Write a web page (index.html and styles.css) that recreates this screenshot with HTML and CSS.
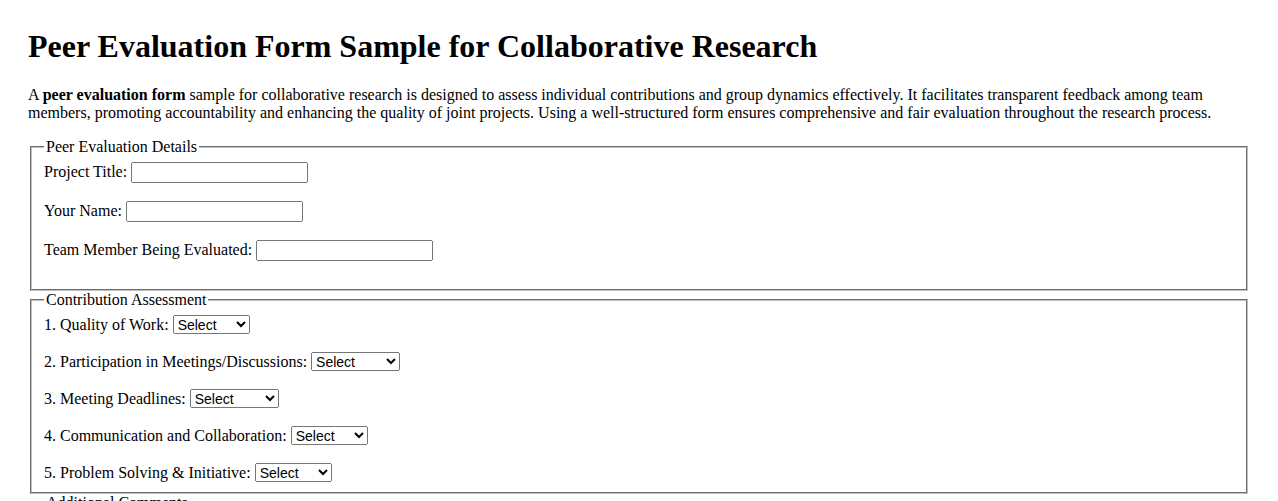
FILE: index.html
```html
<!DOCTYPE html>
<html lang="en">
<head>
<meta charset="utf-8">
<title>Peer Evaluation Form Sample for Collaborative Research</title>
<link rel="stylesheet" href="styles.css">
</head>
<body>
<h1 class="title">Peer Evaluation Form Sample for Collaborative Research</h1>
<p class="intro">A <strong>peer evaluation form</strong> sample for collaborative research is designed to assess individual contributions and group dynamics effectively. It facilitates transparent feedback among team members, promoting accountability and enhancing the quality of joint projects. Using a well-structured form ensures comprehensive and fair evaluation throughout the research process.</p>
<form class="form">
<fieldset class="group">
<legend>Peer Evaluation Details</legend>
<label for="title">Project Title:</label> <input type="text" id="title" class="field"><br><br>
<label for="name">Your Name:</label> <input type="text" id="name" class="field"><br><br>
<label for="member">Team Member Being Evaluated:</label> <input type="text" id="member" class="field"><br><br>
</fieldset>
<fieldset class="group">
<legend>Contribution Assessment</legend>
<label for="q1">1. Quality of Work:</label> <select id="q1" class="pick pick-short"><option>Select</option><option>Excellent</option><option>Good</option><option>Fair</option><option>Poor</option></select><br><br>
<label for="q2">2. Participation in Meetings/Discussions:</label> <select id="q2" class="pick pick-long"><option>Select</option><option>Very Active</option><option>Active</option><option>Moderate</option><option>Inactive</option></select><br><br>
<label for="q3">3. Meeting Deadlines:</label> <select id="q3" class="pick pick-long"><option>Select</option><option>Always</option><option>Usually</option><option>Sometimes</option><option>Rarely</option></select><br><br>
<label for="q4">4. Communication and Collaboration:</label> <select id="q4" class="pick pick-short"><option>Select</option><option>Excellent</option><option>Good</option><option>Fair</option><option>Poor</option></select><br><br>
<label for="q5">5. Problem Solving &amp; Initiative:</label> <select id="q5" class="pick pick-short"><option>Select</option><option>Excellent</option><option>Good</option><option>Fair</option><option>Poor</option></select>
</fieldset>
<fieldset class="group">
<legend>Additional Comments</legend>
<textarea class="comments" rows="4" cols="50"></textarea>
</fieldset>
</form>
</body>
</html>
```
FILE: styles.css
```css
body {
  margin: 28px;
  font-family: "Liberation Serif", "Times New Roman", serif;
  font-size: 16px;
  color: #000;
  background: #fff;
}
.title {
  margin-top: 0;
  font-size: 32px;
  font-weight: bold;
}
.group {
  margin: 0 2px;
  border: 2px groove #c0c0c0;
}
.field {
  box-sizing: border-box;
  width: 177px;
  height: 21px;
  font-family: "Liberation Sans", Arial, sans-serif;
  font-size: 13.333px;
}
.pick {
  box-sizing: border-box;
  height: 19px;
  font-family: "Liberation Sans", Arial, sans-serif;
  font-size: 14px;
}
.pick-short { width: 77px; }
.pick-long { width: 89px; }
```
